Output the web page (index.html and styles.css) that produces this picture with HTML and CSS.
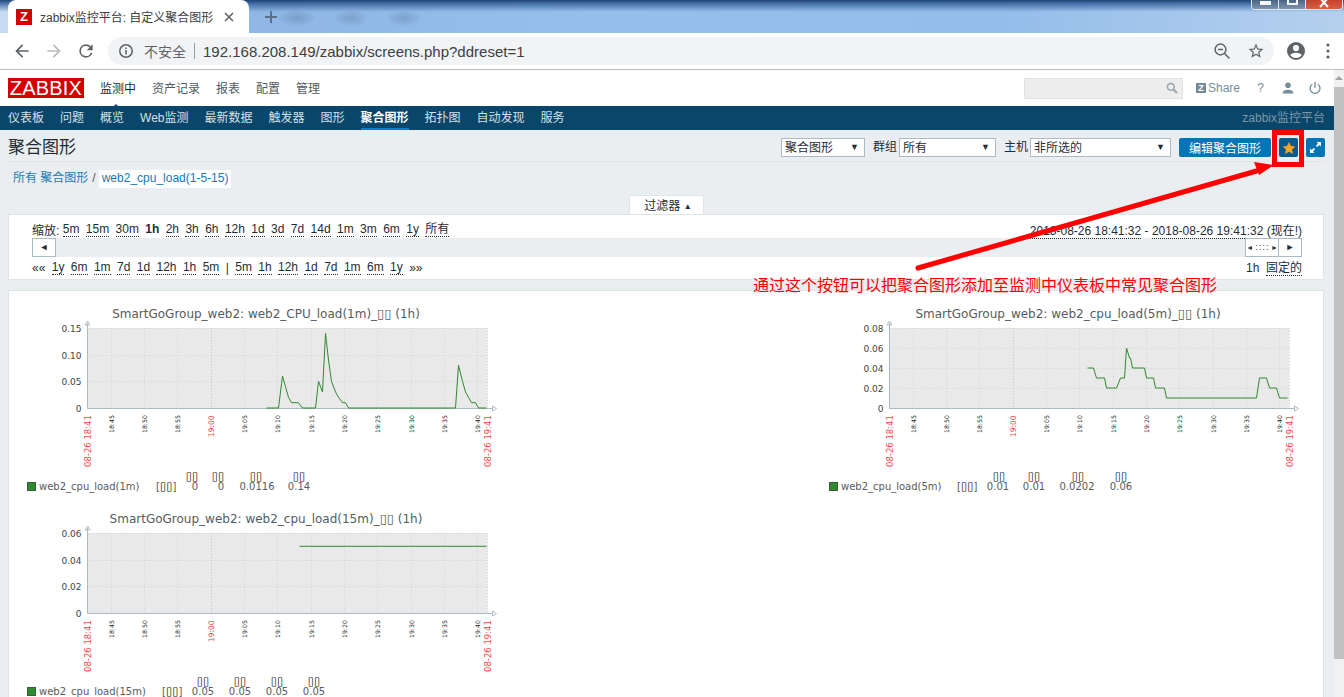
FILE: index.html
```html
<!DOCTYPE html>
<html lang="en">
<head>
    <meta charset="UTF-8">
    <meta name="viewport" content="width=device-width, initial-scale=1.0">
    <title>zabbix监控平台: 自定义聚合图形</title>
    <link rel="stylesheet" href="styles.css">
</head>
<body>
    <div class="tabstrip">
        <div class="tab">
            <span class="favicon">Z</span>
            <span class="tab-title">zabbix监控平台: 自定义聚合图形</span>
            <svg class="tab-close" width="10" height="10" viewBox="0 0 10 10"><path d="M1 1l8 8M9 1l-8 8" stroke="#5f6368" stroke-width="1.6"/></svg>
        </div>
        <svg class="new-tab" width="14" height="14" viewBox="0 0 14 14"><path d="M7 1v12M1 7h12" stroke="#5a6f88" stroke-width="2"/></svg>
        <div class="window-btns">
            <span class="win-btn"><i class="win-min"></i></span>
            <span class="win-btn"><i class="win-max"></i></span>
            <span class="win-btn win-close">
                <svg width="10" height="8" viewBox="0 0 10 8"><path d="M1-2l8 9M9-2l-8 9" stroke="#fff" stroke-width="2"/></svg>
            </span>
        </div>
    </div>

    <div class="toolbar">
        <svg class="tool-icon" width="20" height="20" viewBox="0 0 24 24"><path fill="#5f6368" d="M20 11H7.83l5.59-5.59L12 4l-8 8 8 8 1.41-1.41L7.83 13H20v-2z"/></svg>
        <svg class="tool-icon" width="20" height="20" viewBox="0 0 24 24"><path fill="#b8babd" d="M4 11h12.17l-5.59-5.59L12 4l8 8-8 8-1.41-1.41L16.17 13H4v-2z"/></svg>
        <svg class="tool-icon" width="20" height="20" viewBox="0 0 24 24"><path fill="#5f6368" d="M17.65 6.35A7.96 7.96 0 0 0 12 4a8 8 0 1 0 7.73 10h-2.08A6 6 0 1 1 12 6c1.66 0 3.14.69 4.22 1.78L13 11h7V4l-2.35 2.35z"/></svg>
        <div class="omnibox">
            <svg width="16" height="16" viewBox="0 0 16 16"><circle cx="8" cy="8" r="6.2" fill="none" stroke="#5f6368" stroke-width="1.5"/><path d="M8 7v4.5M8 4.4v1.5" stroke="#5f6368" stroke-width="1.6"/></svg>
            <span class="not-secure">不安全</span>
            <span class="omni-divider"></span>
            <span class="url">192.168.208.149/zabbix/screens.php?ddreset=1</span>
            <svg class="omni-zoom" width="18" height="18" viewBox="0 0 18 18"><circle cx="7.5" cy="7.5" r="5.4" fill="none" stroke="#5f6368" stroke-width="1.5"/><path d="M11.5 11.5l5 5M5 7.5h5" stroke="#5f6368" stroke-width="1.5"/></svg>
            <svg class="omni-star" width="18" height="18" viewBox="0 0 24 24"><path fill="#5f6368" d="M22 9.24l-7.19-.62L12 2 9.19 8.63 2 9.24l5.46 4.73L5.82 21 12 17.27 18.18 21l-1.63-7.03L22 9.24zM12 15.4l-3.76 2.27 1-4.28-3.32-2.88 4.38-.38L12 6.1l1.71 4.04 4.38.38-3.32 2.88 1 4.28L12 15.4z"/></svg>
        </div>
        <svg class="profile" width="20" height="20" viewBox="0 0 20 20"><path fill="#5f6368" d="M10 1a9 9 0 1 0 0 18 9 9 0 0 0 0-18zm0 3a3 3 0 1 1 0 6.2A3 3 0 0 1 10 4zm0 13c-2.4 0-4.500-1.100-5.800-2.900 1.200-1.500 3.600-2.300 5.800-2.300s4.600.8 5.800 2.300C14.500 15.900 12.400 17 10 17z"/></svg>
        <svg class="dots" width="4" height="16" viewBox="0 0 4 16"><circle cx="2" cy="2" r="1.600" fill="#5f6368"/><circle cx="2" cy="8" r="1.600" fill="#5f6368"/><circle cx="2" cy="14" r="1.600" fill="#5f6368"/></svg>
    </div>

    <div class="viewport">
        <div class="page">
            <header class="top-bar">
                <span class="logo">ZABBIX</span>
                <nav class="top-nav">
                    <a class="active">监测中</a>
                    <a>资产记录</a>
                    <a>报表</a>
                    <a>配置</a>
                    <a>管理</a>
                </nav>
                <div class="top-tools">
                    <div class="search">
                        <svg width="12" height="12" viewBox="0 0 12 12"><circle cx="4.800" cy="4.800" r="3.400" fill="none" stroke="#9aa5ab" stroke-width="1.500"/><path d="M7.500 7.500l3.500 3.500" stroke="#9aa5ab" stroke-width="2"/></svg>
                    </div>
                    <span class="share"><b class="share-z">Z</b>Share</span>
                    <span class="help">?</span>
                    <svg width="14" height="14" viewBox="0 0 14 14"><circle cx="7" cy="4.200" r="2.800" fill="#768d99"/><path fill="#768d99" d="M1.500 12.500c0-2.500 2.500-3.800 5.500-3.800s5.500 1.300 5.500 3.800z"/></svg>
                    <svg width="14" height="14" viewBox="0 0 14 14"><path d="M4.200 3.200a5 5 0 1 0 5.600 0" fill="none" stroke="#768d99" stroke-width="1.300"/><path d="M7 1v6" stroke="#768d99" stroke-width="1.300"/></svg>
                </div>
            </header>
            <nav class="sub-nav">
                <a>仪表板</a>
                <a>问题</a>
                <a>概览</a>
                <a>Web监测</a>
                <a>最新数据</a>
                <a>触发器</a>
                <a>图形</a>
                <a class="active">聚合图形</a>
                <a>拓扑图</a>
                <a>自动发现</a>
                <a>服务</a>
                <span class="server-name">zabbix监控平台</span>
            </nav>

            <main class="content">
                <div class="title-row">
                    <h1>聚合图形</h1>
                    <div class="controls">
                        <div class="select select-type">聚合图形</div>
                        <label>群组</label>
                        <div class="select select-group">所有</div>
                        <label>主机</label>
                        <div class="select select-host">非所选的</div>
                        <button class="btn btn-edit">编辑聚合图形</button>
                        <button class="btn btn-icon btn-star">
                            <svg width="14" height="14" viewBox="0 0 24 24"><path fill="#f7a51f" d="M12 1.500l3.300 6.900 7.500 1-5.500 5.200 1.400 7.500L12 18.400l-6.700 3.700 1.400-7.500L1.200 9.400l7.500-1z"/></svg>
                        </button>
                        <button class="btn btn-icon">
                            <svg width="13" height="13" viewBox="0 0 13 13"><path fill="#fff" d="M7.500 1H12v4.500L10.400 3.900 8.200 6.100 6.900 4.800l2.200-2.200zM5.500 12H1V7.500l1.600 1.600 2.200-2.200 1.300 1.300-2.200 2.200z"/></svg>
                        </button>
                    </div>
                </div>

                <div class="breadcrumb">
                    <a>所有 聚合图形</a>
                    <span class="crumb-sep">/</span>
                    <a class="crumb-current">web2_cpu_load(1-5-15)</a>
                </div>

                <div class="filter-tab-row"><span class="filter-tab">过滤器 <i class="filter-arrow">▲</i></span></div>
                <section class="filter-panel">
                    <div class="filter-row">
                        <span class="zoom-label">缩放:</span>
                        <a>5m</a><a>15m</a><a>30m</a><a class="current">1h</a><a>2h</a><a>3h</a><a>6h</a><a>12h</a><a>1d</a><a>3d</a><a>7d</a><a>14d</a><a>1m</a><a>3m</a><a>6m</a><a>1y</a><a>所有</a>
                        <span class="filter-right"><a>2018-08-26 18:41:32</a> - <a>2018-08-26 19:41:32</a> (现在!)</span>
                    </div>
                    <div class="slider-row">
                        <span class="nudge nudge-left">◄</span>
                        <span class="nudge nudge-zoom">◄ ∷∷ ►</span>
                        <span class="nudge nudge-right">►</span>
                    </div>
                    <div class="filter-row filter-row-low">
                        <span>««</span>
                        <a>1y</a><a>6m</a><a>1m</a><a>7d</a><a>1d</a><a>12h</a><a>1h</a><a>5m</a>
                        <span>|</span>
                        <a>5m</a><a>1h</a><a>12h</a><a>1d</a><a>7d</a><a>1m</a><a>6m</a><a>1y</a>
                        <span>»»</span>
                        <span class="filter-right">1h&nbsp;&nbsp;<a>固定的</a></span>
                    </div>
                </section>

                <section class="graphs" id="graphs"></section>
            </main>
        </div>
        <div class="scrollbar">
            <span class="scroll-up"></span>
            <span class="scroll-thumb"></span>
        </div>

        <svg class="callout" width="1344" height="627" viewBox="0 70 1344 627">
            <rect x="1274.500" y="132.500" width="27" height="32" fill="none" stroke="#f00" stroke-width="5"/>
            <path d="M918 268L1260 170" stroke="#f00" stroke-width="5" stroke-linecap="round"/>
            <path fill="#f00" d="M1254 162L1274 165L1259 175z"/>
        </svg>
        <div class="callout-text">通过这个按钮可以把聚合图形添加至监测中仪表板中常见聚合图形</div>
    </div>

    <script src="graphs.js"></script>
</body>
</html>
```

FILE: styles.css
```css
* {
    box-sizing: border-box;
}

html, body {
    margin: 0;
    height: 697px;
    overflow: hidden;
}

body {
    font-family: "Liberation Sans", "Noto Sans CJK SC", sans-serif;
    font-size: 12px;
    color: #1f2c33;
    background-color: #fff;
}

/* browser chrome */
.tabstrip {
    height: 33px;
    display: flex;
    padding-left: 8px;
    background:
        radial-gradient(ellipse 20px 9px at 297px 18px, rgba(70, 100, 140, 0.3), transparent),
        radial-gradient(ellipse 18px 9px at 351px 18px, rgba(70, 100, 140, 0.3), transparent),
        radial-gradient(ellipse 18px 9px at 404px 18px, rgba(70, 100, 140, 0.3), transparent),
        linear-gradient(180deg, rgba(25, 62, 112, 0.95) 0, rgba(45, 90, 150, 0.75) 4px, rgba(140, 185, 235, 0) 12px),
        linear-gradient(90deg, #c6dcf3 0, #8fb6e4 260px, #96c0ec 600px, #94bdea 1000px, #b5d0ee 1344px);
}

.tab {
    width: 241px;
    height: 33px;
    display: flex;
    align-items: center;
    padding-left: 8px;
    background-color: #fff;
    border-radius: 8px 8px 0 0;
}

.favicon {
    width: 16px;
    height: 16px;
    margin-right: 8px;
    background-color: #d40000;
    color: #fff;
    font-weight: bold;
    font-size: 13px;
    line-height: 16px;
    text-align: center;
}

.tab-title {
    width: 176px;
    overflow: hidden;
    white-space: nowrap;
    color: #3c4043;
}

.tab-close {
    margin-left: 8px;
}

.new-tab {
    margin: 10px 0 0 15px;
}

.window-btns {
    margin-left: auto;
    margin-right: 1px;
    display: flex;
    height: 10px;
    border: 1px solid #dfe8f2;
    border-top: none;
    border-radius: 0 0 4px 4px;
    overflow: hidden;
}

.win-btn {
    width: 27px;
    background: linear-gradient(#4a6484, #7d94ae);
    border-right: 1px solid #dfe8f2;
    display: flex;
    justify-content: center;
}

.win-min {
    width: 11px;
    height: 4px;
    margin-top: 1px;
    background-color: #f4f6f8;
}

.win-max {
    width: 11px;
    height: 5px;
    border: 2px solid #f4f6f8;
    border-top: none;
}

.win-close {
    width: 36px;
    border-right: none;
    background: linear-gradient(#c8402c, #d85f45);
}

.toolbar {
    height: 37px;
    display: flex;
    align-items: flex-start;
    padding: 4px 0 0 12px;
    background-color: #fff;
    border-bottom: 1px solid #bdbdbd;
}

.tool-icon {
    margin-top: 4px;
    margin-right: 12px;
}

.omnibox {
    width: 1166px;
    height: 28px;
    display: flex;
    align-items: center;
    padding-left: 10px;
    background-color: #f1f3f4;
    border-radius: 14px;
}

.not-secure {
    margin-left: 10px;
    font-size: 14px;
    color: #5f6368;
}

.omni-divider {
    width: 1px;
    height: 16px;
    margin: 0 8px;
    background-color: #9aa0a6;
}

.url {
    font-size: 15px;
    color: #3c4043;
}

.omni-zoom {
    margin-left: auto;
}

.omni-star {
    margin: 0 9px 0 16px;
}

.profile {
    margin: 4px 0 0 12px;
}

.dots {
    margin: 6px 0 0 20px;
}

/* page */
.viewport {
    position: relative;
    height: 627px;
    display: flex;
    overflow: hidden;
}

.page {
    width: 1334px;
    flex: none;
    background-color: #ebeef0;
}

.top-bar {
    height: 36px;
    display: flex;
    align-items: center;
    padding: 0 12px 0 8px;
    background-color: #fff;
}

.logo {
    width: 76px;
    height: 20px;
    background-color: #d40000;
    color: #fff;
    font-size: 20px;
    line-height: 20px;
    text-align: center;
    letter-spacing: 0.2px;
}

.top-nav {
    display: flex;
    gap: 16px;
    margin: 0 0 2px 16px;
    color: #4f5b62;
}

.top-nav .active {
    position: relative;
    color: #1f2c33;
}

.top-nav .active::after {
    content: "";
    position: absolute;
    left: 10px;
    bottom: -14px;
    border: 6px solid transparent;
    border-top: none;
    border-bottom-color: #0a466a;
}

.top-tools {
    margin-left: auto;
    display: flex;
    align-items: center;
    gap: 13px;
    color: #768d99;
}

.search {
    width: 159px;
    height: 21px;
    display: flex;
    align-items: center;
    justify-content: flex-end;
    padding-right: 4px;
    background-color: #ededed;
    border: 1px solid #e2e2e2;
}

.share {
    display: flex;
    align-items: center;
    width: 44px;
    gap: 2px;
}

.share-z {
    width: 10px;
    height: 10px;
    background-color: #768d99;
    color: #fff;
    font-size: 9px;
    line-height: 10px;
    text-align: center;
}

.help {
    width: 15px;
    text-align: center;
}

.sub-nav {
    height: 24px;
    display: flex;
    gap: 16px;
    align-items: flex-start;
    padding: 0 9px 0 8px;
    line-height: 24px;
    background-color: #0a466a;
    color: #d5e0e7;
}

.sub-nav .active {
    height: 24px;
    color: #fff;
    font-weight: bold;
    border-bottom: 2px solid #0a80c4;
}

.server-name {
    margin-left: auto;
    color: #7b97a8;
}

.content {
    padding: 0 10px 0 8px;
}

.title-row {
    height: 32px;
    display: flex;
    justify-content: space-between;
    margin-right: -1px;
    border-bottom: 1px solid #dfe4e7;
}

h1 {
    margin: 8px 0 0;
    font-size: 17px;
    line-height: 19px;
    font-weight: normal;
}

.controls {
    display: flex;
    padding-top: 8px;
    height: 27px;
}

.controls label {
    line-height: 19px;
    margin-left: 8px;
    margin-right: 2px;
}

.select {
    position: relative;
    height: 19px;
    padding-left: 3px;
    line-height: 18px;
    background-color: #fff;
    border: 1px solid #acbbc3;
}

.select::after {
    content: "▼";
    position: absolute;
    right: 5px;
    top: -1px;
    font-size: 9px;
    color: #1f2c33;
}

.select-type { width: 84px; }
.select-group { width: 97px; }
.select-host { width: 141px; margin-right: 8px; }

.btn {
    height: 19px;
    padding: 0;
    font-family: inherit;
    font-size: 12px;
    color: #fff;
    background-color: #0275b8;
    border: none;
    border-radius: 2px;
}

.btn-edit {
    width: 92px;
    margin-right: 8px;
}

.btn-icon {
    width: 19px;
    display: flex;
    align-items: center;
    justify-content: center;
}

.btn-star {
    margin-right: 8px;
    background-color: #095a8f;
}

.breadcrumb {
    height: 18px;
    margin-top: 8px;
    display: flex;
    align-items: flex-start;
    padding-left: 5px;
    line-height: 17px;
    color: #1a7ab5;
}

.crumb-sep {
    margin: 0 3px 0 4px;
    color: #4f5b62;
}

.crumb-current {
    height: 18px;
    padding: 0 3px;
    background-color: #fff;
}

.filter-tab-row {
    margin-top: 7px;
    height: 19px;
    text-align: center;
}

.filter-tab {
    display: inline-block;
    width: 75px;
    height: 19px;
    padding-left: 4px;
    line-height: 20px;
    background-color: #fff;
    border: 1px solid #dfe4e7;
    border-bottom: none;
}

.filter-arrow {
    font-style: normal;
    font-size: 8px;
    vertical-align: 1px;
}

.filter-panel {
    height: 66px;
    padding: 0 21px 0 23px;
    background-color: #fff;
    border: 1px solid #dfe4e7;
}

.filter-row {
    height: 23px;
    display: flex;
    gap: 6.4px;
    align-items: center;
    padding-top: 6px;
    white-space: nowrap;
}

.filter-row-low {
    height: 22px;
    padding-top: 0;
}

.filter-row a {
    border-bottom: 1px dotted #1f2c33;
    line-height: 13px;
}

.filter-row .current {
    font-weight: bold;
    border-bottom: none;
}

.zoom-label {
    margin-right: -3px;
}

.filter-right {
    margin-left: auto;
}

.slider-row {
    height: 19px;
    display: flex;
    background-color: #ebeef0;
}

.nudge {
    height: 19px;
    background-color: #fff;
    border: 1px solid #acbbc3;
    font-size: 9px;
    line-height: 17px;
    text-align: center;
}

.nudge-left {
    width: 24px;
    margin-right: auto;
}

.nudge-zoom {
    width: 33px;
    border-right: none;
    font-size: 7px;
    white-space: nowrap;
}

.nudge-right {
    width: 24px;
}

.graphs {
    margin-top: 10px;
    height: 420px;
    display: grid;
    grid-template-columns: 800px 500px;
    grid-auto-rows: 205px;
    padding: 9px 0 0 1px;
    background-color: #fff;
    border: 1px solid #dfe4e7;
}

.graph {
    display: block;
    font-family: "DejaVu Sans", sans-serif;
}

.graph-plot { fill: #e9e9e9; }
.graph-grid { stroke: #c9d6da; stroke-dasharray: 1 2; }
.graph-grid-major { stroke: #b4c6cd; }
.graph-axis { stroke: #acbbc3; fill: none; }
.graph-line { stroke: #2f8a2f; fill: none; stroke-width: 1; }
.graph-title { font-size: 12px; fill: #555c61; text-anchor: middle; }
.graph-title .tofu { font-size: 13px; }
.graph-ylabel { font-size: 9px; fill: #444; text-anchor: end; }
.graph-tick { font-size: 6.200px; fill: #222; }
.graph-tick-red { font-size: 7.500px; fill: #f33; }
.graph-edge { font-size: 8.500px; fill: #f44; }
.graph-legend { font-size: 10px; fill: #555c61; }
.graph-legend .tofu { font-size: 11.500px; fill: #111; }
.graph-legend-num { font-size: 10px; fill: #555c61; text-anchor: middle; }
.graph-legend-head { font-size: 11.500px; fill: #111; text-anchor: middle; }
.graph-swatch { fill: #2f8a2f; stroke: #3d5a3d; }

.scrollbar {
    width: 10px;
    flex: none;
    display: flex;
    flex-direction: column;
    align-items: center;
    background-color: #f1f1f1;
}

.scroll-up {
    margin-top: 6px;
    border: 4px solid transparent;
    border-top: none;
    border-bottom: 4px solid #a3a3a3;
}

.scroll-thumb {
    width: 10px;
    height: 572px;
    margin-top: 7px;
    background-color: #c1c1c1;
}

/* annotation drawn over the screenshot */
.callout {
    position: absolute;
    left: 0;
    top: 0;
    pointer-events: none;
}

.callout-text {
    position: absolute;
    left: 753px;
    top: 205px;
    font-size: 16px;
    line-height: 22px;
    color: #f00;
    white-space: nowrap;
}
```

FILE: graphs.js
```js
// x is px from the left of the plot, y is the value
const TOFU = '<tspan class="tofu">▯▯</tspan>';

const charts = [
    {
        title: `SmartGoGroup_web2: web2_CPU_load(1m)_${TOFU} (1h)`,
        titleX: 256,
        plotLeft: 77.5,
        max: 0.15,
        ticks: [[0, '0'], [0.05, '0.05'], [0.1, '0.10'], [0.15, '0.15']],
        points: [[179, 0], [191, 0], [195, .06], [198, .04], [201, .02], [204, .01], [211, .01], [215, 0], [228, 0], [231, .05], [235, .03], [238, .14], [241, .09], [244, .05], [248, .03], [251, .02], [255, .01], [258, .01], [261, 0], [368, 0], [371, .08], [375, .05], [378, .03], [381, .02], [384, .01], [388, .01], [391, 0], [399, 0]],
        item: 'web2_cpu_load(1m)',
        bracketX: 146,
        cols: [[182, 185, '0'], [208, 211, '0'], [246, 247, '0.0116'], [289, 289, '0.14']]
    },
    {
        title: `SmartGoGroup_web2: web2_cpu_load(5m)_${TOFU} (1h)`,
        titleX: 258,
        plotLeft: 79.5,
        max: 0.08,
        ticks: [[0, '0'], [0.02, '0.02'], [0.04, '0.04'], [0.06, '0.06'], [0.08, '0.08']],
        points: [[198, .04], [204, .04], [207, .03], [215, .03], [217, .02], [227, .02], [231, .03], [235, .03], [237, .06], [240, .05], [241, .05], [243, .04], [255, .04], [257, .03], [264, .03], [266, .02], [275, .02], [277, .01], [367, .01], [370, .03], [377, .03], [380, .02], [387, .02], [390, .01], [398, .01]],
        item: 'web2_cpu_load(5m)',
        legendLeft: 19,
        bracketX: 147,
        cols: [[189, 188, '0.01'], [224, 224, '0.01'], [268, 267, '0.0202'], [311, 311, '0.06']]
    },
    {
        title: `SmartGoGroup_web2: web2_cpu_load(15m)_${TOFU} (1h)`,
        titleX: 256,
        plotLeft: 77.5,
        max: 0.06,
        ticks: [[0, '0'], [0.02, '0.02'], [0.04, '0.04'], [0.06, '0.06']],
        points: [[212, .05], [399, .05]],
        item: 'web2_cpu_load(15m)',
        bracketX: 152,
        cols: [[193, 193, '0.05'], [230, 230, '0.05'], [267, 267, '0.05'], [304, 304, '0.05']]
    }
];

const PLOT_TOP = 28;
const PLOT_W = 400;
const PLOT_H = 80;
const MIN_PX = PLOT_W / 60;
const BOTTOM = PLOT_TOP + PLOT_H;

function rotated(x, y, cls, text) {
    return `<text class="${cls}" transform="translate(${x} ${y}) rotate(-90)">${text}</text>`;
}

function drawChart(c) {
    const left = c.plotLeft;
    const right = left + PLOT_W;
    const legendLeft = c.legendLeft || 17;
    let out = `<text class="graph-title" x="${c.titleX}" y="18">${c.title}</text>`;
    out += `<rect class="graph-plot" x="${left}" y="${PLOT_TOP}" width="${PLOT_W}" height="${PLOT_H}"/>`;

    c.ticks.forEach(([value, label]) => {
        const y = Math.round(BOTTOM - value / c.max * PLOT_H) + 0.5;
        out += `<line class="graph-grid" x1="${left}" x2="${right}" y1="${y}" y2="${y}"/>`;
        out += `<text class="graph-ylabel" x="${left - 6}" y="${y + 3}">${label}</text>`;
    });

    // the hour labels start at 18:45, 3.47 minutes into the range
    for (let i = 0; i < 12; i++) {
        const x = Math.round(left + (3.47 + i * 5) * MIN_PX) + 0.5;
        const total = 45 + i * 5;
        const label = total < 60 ? `18:${total}` : `19:${String(total - 60).padStart(2, '0')}`;
        const major = label === '19:00';
        out += `<line class="graph-grid${major ? ' graph-grid-major' : ''}" x1="${x}" x2="${x}" y1="${PLOT_TOP}" y2="${BOTTOM}"/>`;
        out += rotated(x + 2, BOTTOM + (major ? 29 : 25), major ? 'graph-tick-red' : 'graph-tick', label);
    }
    out += `<line class="graph-grid" x1="${right}" x2="${right}" y1="${PLOT_TOP}" y2="${BOTTOM}"/>`;

    out += `<path class="graph-axis" d="M${left} ${PLOT_TOP - 5}V${BOTTOM + 0.5}H${right + 5}"/>`;
    out += `<path class="graph-axis" fill="#fff" d="M${left - 2.5} ${PLOT_TOP - 3}l2.500-4 2.500 4zM${right + 5} ${BOTTOM - 2}l4 2.500-4 2.500z"/>`;

    const pts = c.points.map(([x, v]) => `${left + x},${(BOTTOM - v / c.max * PLOT_H).toFixed(1)}`).join(' ');
    out += `<polyline class="graph-line" points="${pts}"/>`;

    out += rotated(left + 3, BOTTOM + 59, 'graph-edge', '08-26 18:41');
    out += rotated(right + 3, BOTTOM + 59, 'graph-edge', '08-26 19:41');

    const head = BOTTOM + 72;
    const row = BOTTOM + 82;
    out += `<rect class="graph-swatch" x="${legendLeft + 0.5}" y="${row - 7.5}" width="8" height="8"/>`;
    out += `<text class="graph-legend" x="${legendLeft + 12}" y="${row}">${c.item}</text>`;
    out += `<text class="graph-legend" x="${c.bracketX}" y="${row}">[${TOFU}]</text>`;
    c.cols.forEach(([headX, numX, num]) => {
        out += `<text class="graph-legend-head" x="${headX}" y="${head}">▯▯</text>`;
        out += `<text class="graph-legend-num" x="${numX}" y="${row}">${num}</text>`;
    });

    return `<svg class="graph" width="500" height="205" viewBox="0 0 500 205">${out}</svg>`;
}

document.getElementById('graphs').innerHTML = charts.map(drawChart).join('');
```
